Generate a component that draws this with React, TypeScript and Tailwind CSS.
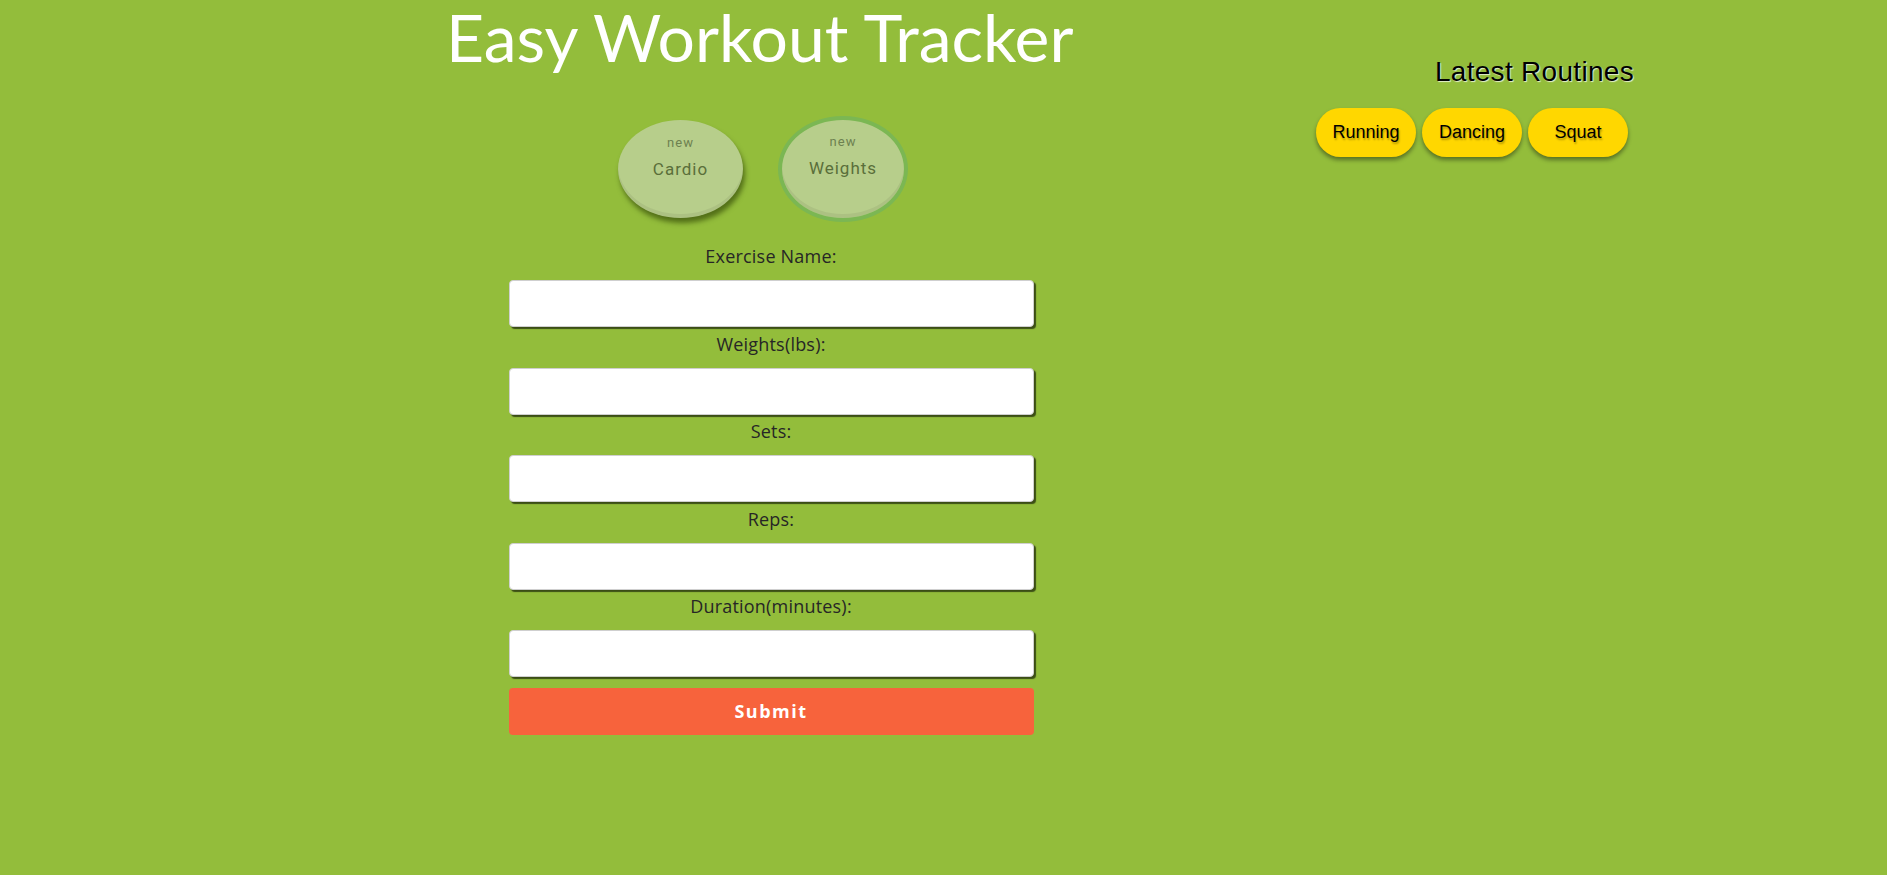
import React from 'react';

const fields = ['Exercise Name:', 'Weights(lbs):', 'Sets:', 'Reps:', 'Duration(minutes):'];
const routines = ['Running', 'Dancing', 'Squat'];

export default function App() {
  return (
    <div className="min-h-[875px] w-full bg-[#93bd3b] flex">
      {/* left: title + form */}
      <div className="ml-[438px] w-[666px] flex flex-col items-center">
        <h1 className="self-start ml-[8px] text-[66px] leading-[73px] text-white font-['Lato',sans-serif]">
          Easy Workout Tracker
        </h1>

        <div className="mt-[43px] flex items-center gap-[35px] pr-[16px] font-['Roboto',sans-serif]">
          <button className="w-[125px] h-[98px] rounded-[50%] bg-[#b7ce8b] shadow-[inset_0_-4px_0_rgba(0,0,0,0.06),2px_5px_5px_rgba(40,60,0,0.6)] flex flex-col items-center pt-[14px]">
            <span className="text-[13px] leading-[18px] tracking-[1px] text-[#6d8150]">new</span>
            <span className="mt-[6px] text-[17px] leading-[22px] tracking-[1px] text-[#5a6f3a]">Cardio</span>
          </button>
          <button className="w-[130px] h-[106px] rounded-[50%] border-4 border-[#7bb753] bg-[#b7ce8b] shadow-[inset_0_-4px_0_rgba(0,0,0,0.06)] flex flex-col items-center pt-[13px]">
            <span className="text-[13px] leading-[18px] tracking-[1px] text-[#6d8150]">new</span>
            <span className="mt-[6px] text-[17px] leading-[22px] tracking-[1px] text-[#5a6f3a]">Weights</span>
          </button>
        </div>

        <form className="mt-[22px] w-[525px] flex flex-col items-center font-['Open_Sans',sans-serif]">
          {fields.map((f, i) => (
            <div key={f} className={i === 0 ? 'w-full flex flex-col items-center' : 'w-full flex flex-col items-center mt-[4.5px]'}>
              <label className="text-[18px] leading-6 tracking-[0.2px] text-[#262626]">{f}</label>
              <input
                type="text"
                className="mt-3 w-full h-[47px] bg-white rounded-[4px] border border-[#cfcfcf] shadow-[2px_2px_1px_rgba(30,40,10,0.75)] outline-none px-3"
              />
            </div>
          ))}
          <button
            type="button"
            className="mt-[11px] w-full h-[47px] rounded-[4px] bg-[#f7633c] text-white font-bold text-[18px] tracking-[1.5px]"
          >
            Submit
          </button>
        </form>
      </div>

      {/* right: latest routines */}
      <div className="flex-1 flex flex-col items-end pr-[253px] pt-[56px] font-['Liberation_Sans',Arial,sans-serif]">
        <h2 className="text-[28px] leading-[32px] tracking-[0.3px] text-black [text-shadow:1px_1px_1px_rgba(255,255,255,0.75)]">
          Latest Routines
        </h2>
        <div className="mt-[20px] flex gap-[6px] pr-[6px]">
          {routines.map((r) => (
            <button
              key={r}
              className="w-[100px] h-[49px] rounded-full bg-[#ffd700] text-[18px] text-black shadow-[0_3px_4px_rgba(0,0,0,0.4)] [text-shadow:1px_2px_2px_rgba(0,0,0,0.3)]"
            >
              {r}
            </button>
          ))}
        </div>
      </div>
    </div>
  );
}
